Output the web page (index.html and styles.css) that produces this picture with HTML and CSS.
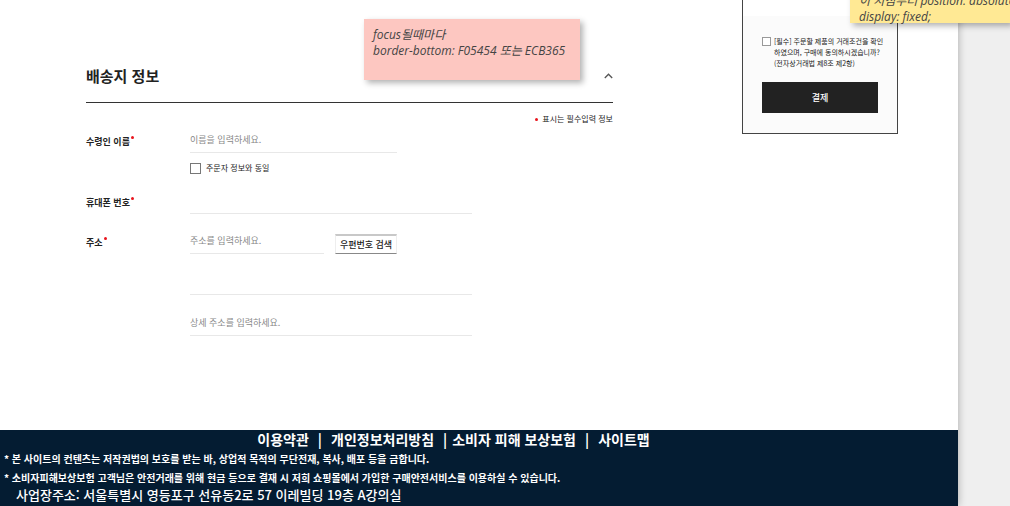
FILE: index.html
```html
<!DOCTYPE html>
<html lang="ko">
<head>
<meta charset="utf-8">
<title>배송지 정보</title>
<link rel="stylesheet" href="styles.css">
</head>
<body>
<div class="page">
  <main class="checkout">
    <form class="shipping" id="order">
      <header class="shipping-head">
        <h1 class="shipping-title">배송지 정보</h1>
        <button class="toggle" type="button" aria-label="접기">
          <svg width="9" height="6" viewBox="0 0 9 6" fill="none" stroke="#555" stroke-width="1.3"><path d="M0.8 5 4.5 1.2 8.2 5"/></svg>
        </button>
      </header>
      <p class="required-info"><span class="dot"></span>표시는 필수입력 정보</p>
      <div class="fields">
        <label class="label" for="name">수령인 이름<span class="dot"></span></label>
        <div class="stack">
          <input class="input input-name" id="name" type="text" placeholder="이름을 입력하세요.">
          <label class="same"><input class="check" type="checkbox">주문자 정보와 동일</label>
        </div>
        <label class="label" for="phone">휴대폰 번호<span class="dot"></span></label>
        <input class="input" id="phone" type="tel">
        <label class="label" for="address">주소<span class="dot"></span></label>
        <div class="address">
          <div class="zip">
            <input class="input input-zip" id="address" type="text" placeholder="주소를 입력하세요.">
            <button class="zip-button" type="button">우편번호 검색</button>
          </div>
          <input class="input" type="text" aria-label="기본 주소">
          <input class="input" type="text" aria-label="상세 주소" placeholder="상세 주소를 입력하세요.">
        </div>
      </div>
    </form>
    <aside class="summary">
      <div class="summary-body">
        <label class="agree"><input class="check" type="checkbox" form="order"><span>[필수] 주문할 제품의 거래조건을 확인<br>하였으며, 구매에 동의하시겠습니까?<br>(전자상거래법 제8조 제2항)</span></label>
        <button class="pay" type="submit" form="order">결제</button>
      </div>
    </aside>
  </main>
  <footer class="footer">
    <nav class="links">
      <a href="#terms">이용약관</a><span class="bar">|</span><a href="#privacy">개인정보처리방침</a><span class="bar bar-tight">|</span><a href="#insurance">소비자 피해 보상보험</a><span class="bar">|</span><a href="#sitemap">사이트맵</a>
    </nav>
    <p class="notice">* 본 사이트의 컨텐츠는 저작권법의 보호를 받는 바, 상업적 목적의 무단전재, 복사, 배포 등을 금합니다.</p>
    <p class="notice">* 소비자피해보상보험 고객님은 안전거래를 위해 현금 등으로 결재 시 저희 쇼핑몰에서 가입한 구매안전서비스를 이용하실 수 있습니다.</p>
    <p class="location">사업장주소: 서울특별시 영등포구 선유동2로 57 이레빌딩 19층 A강의실</p>
  </footer>
</div>
<div class="note note-pink">focus될때마다<br>border-bottom: F05454 또는 ECB365</div>
<div class="note note-yellow">이 지점부터 position: absolute<br>display: fixed;</div>
</body>
</html>
```
FILE: styles.css
```css
* {
  box-sizing: border-box;
}

body {
  margin: 0;
  padding-right: 52px;
  position: relative;
  min-height: 100vh;
  overflow: hidden;
  background: #efefef;
  color: #222;
  font-family: "Noto Sans CJK KR", sans-serif;
  font-size: 9px;
  line-height: 12px;
}

h1,
p {
  margin: 0;
}

button,
input {
  font: inherit;
  color: inherit;
  border-radius: 0;
}

.page {
  display: flex;
  flex-direction: column;
  min-height: 100vh;
  background: #fff;
  box-shadow: 0 0 8px rgba(0, 0, 0, 0.3);
}

.checkout {
  display: flex;
  align-items: flex-start;
  gap: 129px;
  padding: 0 60px 94px 86px;
}

.shipping {
  flex: 1;
  padding-top: 64px;
}

.shipping-head {
  display: flex;
  align-items: center;
  justify-content: space-between;
  padding-bottom: 14px;
  border-bottom: 1px solid #333;
}

.shipping-title {
  font-size: 15px;
  line-height: 24px;
  font-weight: 700;
}

.toggle {
  display: flex;
  padding: 0;
  border: 0;
  background: none;
}

.required-info {
  display: flex;
  align-items: center;
  justify-content: flex-end;
  gap: 4px;
  padding-top: 10px;
  font-size: 8px;
}

.dot {
  width: 3px;
  height: 3px;
  border-radius: 50%;
  background: #e8141c;
}

.fields {
  display: grid;
  grid-template-columns: 88px 282px;
  column-gap: 16px;
  row-gap: 15px;
  padding-top: 3px;
}

.label {
  display: flex;
  align-items: flex-start;
  gap: 1px;
  padding-top: 8px;
  font-weight: 700;
}

.input {
  width: 100%;
  height: 25px;
  padding: 0 0 1px;
  border: 0;
  border-bottom: 1px solid #e8e8e8;
  background: none;
  outline: 0;
}

.input:focus {
  border-color: #f05454;
}

.input::placeholder {
  color: #888;
  opacity: 1;
}

.stack {
  display: flex;
  flex-direction: column;
  gap: 9px;
}

.input-name {
  width: 207px;
}

.same {
  display: flex;
  align-items: center;
  gap: 5px;
  font-size: 8px;
}

.check {
  flex: none;
  appearance: none;
  width: 11px;
  height: 11px;
  margin: 0;
  border: 1px solid #777;
  background: #fff;
}

.check:checked {
  background: #222;
}

.address {
  display: flex;
  flex-direction: column;
  gap: 16px;
}

.zip {
  display: flex;
  gap: 11px;
}

.input-zip {
  width: 134px;
}

.zip-button {
  width: 62px;
  height: 20px;
  margin-top: 5px;
  padding: 0;
  border: 1px solid #eee;
  border-top: 2px solid #c8c8c8;
  border-bottom-color: #888;
  background: #fff;
  font-weight: 500;
  white-space: nowrap;
}

.summary {
  width: 156px;
  padding-top: 16px;
  border: 1px solid #444;
  border-top: 0;
}

.summary-body {
  display: flex;
  flex-direction: column;
  gap: 13px;
  padding: 20px 19px;
  background: #fbfbfb;
}

.agree {
  display: flex;
  align-items: flex-start;
  gap: 3px;
  font-size: 7px;
  line-height: 11px;
  white-space: nowrap;
}

.agree .check {
  width: 9px;
  height: 9px;
  margin-top: 1px;
  border-color: #999;
}

.pay {
  height: 31px;
  padding: 0;
  border: 0;
  background: #222;
  color: #fff;
  font-weight: 500;
}

.footer {
  flex: 1;
  background: #041c32;
  color: #fff;
}

.links {
  display: flex;
  justify-content: center;
  padding-right: 51px;
  font-size: 14px;
  line-height: 19px;
  font-weight: 700;
}

.links a {
  color: inherit;
  text-decoration: none;
}

.bar {
  padding: 0 9px;
}

.bar-tight {
  padding-right: 5px;
}

.notice {
  padding-left: 4px;
  font-size: 10px;
  line-height: 19px;
  font-weight: 700;
}

.location {
  padding-left: 16px;
  font-size: 13px;
  line-height: 16px;
  font-weight: 500;
}

.note {
  position: absolute;
  padding: 8px 9px;
  color: #444;
  font-family: "Open Sans", "Noto Sans CJK KR", sans-serif;
  font-size: 12px;
  line-height: 16px;
  font-style: italic;
  white-space: nowrap;
  box-shadow: 3px 3px 6px rgba(0, 0, 0, 0.3);
}

.note-pink {
  top: 19px;
  left: 364px;
  width: 216px;
  height: 61px;
  background: #fdc7c1;
}

.note-yellow {
  top: -15px;
  right: 0;
  width: 160px;
  height: 38px;
  background: #ffe994;
}
```
